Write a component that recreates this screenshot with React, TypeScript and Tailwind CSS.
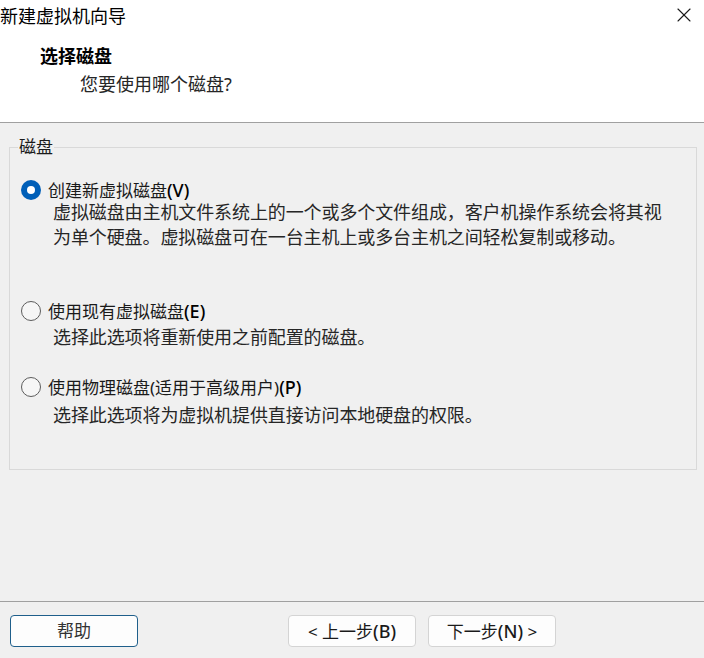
import { X } from 'lucide-react';

const FONT = '"Noto Sans", "Noto Sans CJK SC", sans-serif';

interface OptionProps {
  label: string;
  hotkey: string;
  checked?: boolean;
  lines: string[];
  rowClass: string;
  descClass: string;
}

function RadioOption({ label, hotkey, checked, lines, rowClass, descClass }: OptionProps) {
  return (
    <div>
      <div className={`flex h-[20px] items-center pl-[11px] ${rowClass}`}>
        {checked ? (
          <span className="flex h-[20px] w-[20px] items-center justify-center rounded-full bg-[#005fb8]">
            <span className="h-[8px] w-[8px] rounded-full bg-white" />
          </span>
        ) : (
          <span className="h-[20px] w-[20px] rounded-full border border-[#5c5c5c] bg-[#f6f6f6]" />
        )}
        <span className="ml-[7px] text-[17px] leading-[20px] text-[#1a1a1a]">
          {label}
          <span className="text-[18px] font-medium text-black">{hotkey}</span>
        </span>
      </div>
      <div className={`pl-[43px] text-[18px] leading-[25px] tracking-[-0.1px] text-[#262626] ${descClass}`}>
        {lines.map((l) => (
          <div key={l}>{l}</div>
        ))}
      </div>
    </div>
  );
}

export default function App() {
  return (
    <div
      className="flex h-[658px] w-[704px] flex-col overflow-hidden bg-[#f0f0f0]"
      style={{ fontFamily: FONT }}
    >
      {/* Header */}
      <div className="h-[123px] border-b border-[#a0a0a0] bg-white">
        <div className="flex h-[32px] items-center justify-between">
          <span className="text-[18px] leading-[32px] text-black">新建虚拟机向导</span>
          <X className="-mt-[3px] mr-[8px] h-[24px] w-[24px] text-[#1a1a1a]" strokeWidth={1.1} />
        </div>
        <div className="mt-[12px] pl-[40px] text-[18px] font-bold leading-[24px] text-black">选择磁盘</div>
        <div className="mt-[4px] pl-[80px] text-[18px] leading-[24px] text-[#262626]">您要使用哪个磁盘?</div>
      </div>

      {/* Body */}
      <div className="h-[479px] border-b border-[#a0a0a0]">
        <fieldset className="ml-[9px] mt-[14px] h-[333px] w-[688px] border border-[#d9d9d9]">
          <legend className="ml-[8px] px-[1px] text-[17px] leading-[20px] text-[#1a1a1a]">磁盘</legend>
          <RadioOption
            checked
            label="创建新虚拟磁盘"
            hotkey="(V)"
            rowClass="mt-[23px]"
            descClass="mt-0"
            lines={[
              '虚拟磁盘由主机文件系统上的一个或多个文件组成，客户机操作系统会将其视',
              '为单个硬盘。虚拟磁盘可在一台主机上或多台主机之间轻松复制或移动。',
            ]}
          />
          <RadioOption
            label="使用现有虚拟磁盘"
            hotkey="(E)"
            rowClass="mt-[51px]"
            descClass="mt-[4px]"
            lines={['选择此选项将重新使用之前配置的磁盘。']}
          />
          <RadioOption
            label="使用物理磁盘(适用于高级用户)"
            hotkey="(P)"
            rowClass="mt-[27px]"
            descClass="mt-[6px]"
            lines={['选择此选项将为虚拟机提供直接访问本地硬盘的权限。']}
          />
        </fieldset>
      </div>

      {/* Footer */}
      <div className="flex items-start pl-[10px] pt-[13px]">
        <button className="h-[32px] w-[128px] rounded-[4px] border border-[#1f5f8b] bg-[#fdfdfd] text-[17px] text-[#333]">
          帮助
        </button>
        <button className="ml-[150px] h-[32px] w-[128px] rounded-[4px] border border-[#d4d4d4] bg-[#fdfdfd] text-[17px] text-[#1a1a1a]">
          &lt; 上一步<span className="text-[18px] font-medium">(B)</span>
        </button>
        <button className="ml-[12px] h-[32px] w-[128px] rounded-[4px] border border-[#d4d4d4] bg-[#fdfdfd] text-[17px] text-[#1a1a1a]">
          下一步<span className="text-[18px] font-medium">(N)</span> &gt;
        </button>
      </div>
    </div>
  );
}
